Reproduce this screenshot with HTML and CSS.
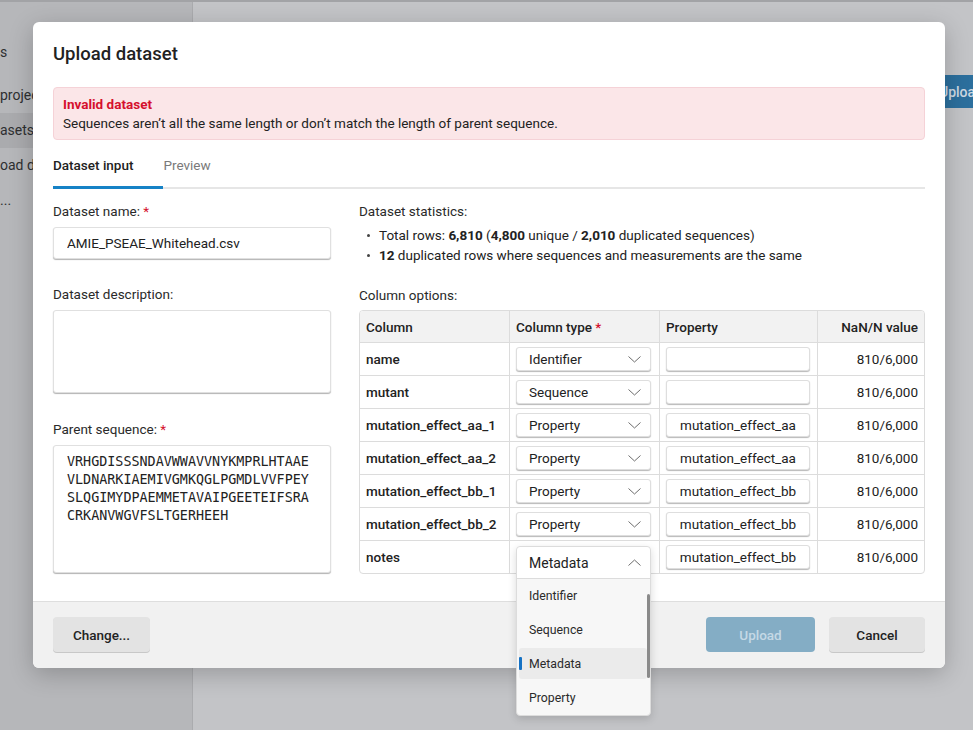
FILE: index.html
```html
<!DOCTYPE html>
<html lang="en">
<head>
<meta charset="utf-8">
<title>Upload dataset</title>
<link rel="stylesheet" href="styles.css">
</head>
<body>
<div class="app">
  <aside class="sidebar">
    <div class="nav-head">s</div>
    <div class="nav-item">projects</div>
    <div class="nav-item active">asets</div>
    <div class="nav-item">oad data</div>
    <div class="nav-item">...</div>
  </aside>
  <main class="main">
    <div class="main-bar">
      <button class="app-upload">Upload</button>
    </div>
  </main>
</div>

<div class="modal">
  <div class="modal-body">
    <h1 class="modal-title">Upload dataset</h1>
    <div class="alert">
      <div class="alert-title">Invalid dataset</div>
      <div class="alert-text">Sequences aren’t all the same length or don’t match the length of parent sequence.</div>
    </div>
    <div class="tabs">
      <div class="tab active">Dataset input</div>
      <div class="tab">Preview</div>
    </div>
    <div class="content">
      <div class="left">
        <div class="label">Dataset name: <span class="req">*</span></div>
        <input class="input" type="text" value="AMIE_PSEAE_Whitehead.csv">
        <div class="label gap">Dataset description:</div>
        <textarea class="textarea desc"></textarea>
        <div class="label gap2">Parent sequence: <span class="req">*</span></div>
        <textarea class="textarea seq">VRHGDISSSNDAVWWAVVNYKMPRLHTAAE
VLDNARKIAEMIVGMKQGLPGMDLVVFPEY
SLQGIMYDPAEMMETAVAIPGEETEIFSRA
CRKANVWGVFSLTGERHEEH</textarea>
      </div>
      <div class="right">
        <div class="label stats-label">Dataset statistics:</div>
        <ul class="stats">
          <li>Total rows: <b>6,810</b> (<b>4,800</b> unique / <b>2,010</b> duplicated sequences)</li>
          <li><b>12</b> duplicated rows where sequences and measurements are the same</li>
        </ul>
        <div class="label opts">Column options:</div>
        <div class="grid">
          <div class="row head">
            <div class="cell">Column</div>
            <div class="cell"><span>Column type <span class="req">*</span></span></div>
            <div class="cell">Property</div>
            <div class="cell num">NaN/N value</div>
          </div>
          <div class="row">
            <div class="cell name">name</div>
            <div class="cell"><div class="select"><span>Identifier</span><svg class="chev" viewBox="0 0 13 7" width="13" height="7"><polyline points="0.5,0.5 6.5,6 12.5,0.5"/></svg></div></div>
            <div class="cell"><div class="prop"></div></div>
            <div class="cell num">810/6,000</div>
          </div>
          <div class="row">
            <div class="cell name">mutant</div>
            <div class="cell"><div class="select"><span>Sequence</span><svg class="chev" viewBox="0 0 13 7" width="13" height="7"><polyline points="0.5,0.5 6.5,6 12.5,0.5"/></svg></div></div>
            <div class="cell"><div class="prop"></div></div>
            <div class="cell num">810/6,000</div>
          </div>
          <div class="row">
            <div class="cell name">mutation_effect_aa_1</div>
            <div class="cell"><div class="select"><span>Property</span><svg class="chev" viewBox="0 0 13 7" width="13" height="7"><polyline points="0.5,0.5 6.5,6 12.5,0.5"/></svg></div></div>
            <div class="cell"><div class="prop">mutation_effect_aa</div></div>
            <div class="cell num">810/6,000</div>
          </div>
          <div class="row">
            <div class="cell name">mutation_effect_aa_2</div>
            <div class="cell"><div class="select"><span>Property</span><svg class="chev" viewBox="0 0 13 7" width="13" height="7"><polyline points="0.5,0.5 6.5,6 12.5,0.5"/></svg></div></div>
            <div class="cell"><div class="prop">mutation_effect_aa</div></div>
            <div class="cell num">810/6,000</div>
          </div>
          <div class="row">
            <div class="cell name">mutation_effect_bb_1</div>
            <div class="cell"><div class="select"><span>Property</span><svg class="chev" viewBox="0 0 13 7" width="13" height="7"><polyline points="0.5,0.5 6.5,6 12.5,0.5"/></svg></div></div>
            <div class="cell"><div class="prop">mutation_effect_bb</div></div>
            <div class="cell num">810/6,000</div>
          </div>
          <div class="row">
            <div class="cell name">mutation_effect_bb_2</div>
            <div class="cell"><div class="select"><span>Property</span><svg class="chev" viewBox="0 0 13 7" width="13" height="7"><polyline points="0.5,0.5 6.5,6 12.5,0.5"/></svg></div></div>
            <div class="cell"><div class="prop">mutation_effect_bb</div></div>
            <div class="cell num">810/6,000</div>
          </div>
          <div class="row">
            <div class="cell name">notes</div>
            <div class="cell combo-cell">
              <div class="combo">
                <div class="combo-head"><span>Metadata</span><svg class="chev" viewBox="0 0 13 7" width="13" height="7"><polyline points="0.5,6.5 6.5,1 12.5,6.5"/></svg></div>
                <ul class="menu">
                  <li class="opt">Identifier</li>
                  <li class="opt">Sequence</li>
                  <li class="opt selected">Metadata</li>
                  <li class="opt">Property</li>
                </ul>
                <div class="scroll"></div>
              </div>
            </div>
            <div class="cell"><div class="prop">mutation_effect_bb</div></div>
            <div class="cell num">810/6,000</div>
          </div>
        </div>
      </div>
    </div>
  </div>
  <div class="modal-footer">
    <button class="btn change">Change...</button>
    <button class="btn primary" disabled>Upload</button>
    <button class="btn cancel">Cancel</button>
  </div>
</div>
</body>
</html>
```

FILE: styles.css
```css
* { box-sizing: border-box; }

body {
  margin: 0;
  width: 973px;
  height: 730px;
  overflow: hidden;
  position: relative;
  font-family: Roboto, "Noto Sans", "Liberation Sans", sans-serif;
  font-size: 13.5px;
  color: #222;
}

.modal-title,
.tab.active,
.row.head,
.cell.name,
.btn,
.app-upload {
  font-family: Roboto, "Noto Sans", sans-serif;
  font-weight: 500;
}

/* background app (dimmed) */
.app {
  display: flex;
  height: 730px;
  border-top: 2px solid #a2a3a6;
}
.sidebar {
  width: 193px;
  flex: none;
  background: #b6b7ba;
  border-right: 1px solid #aaabae;
  padding-top: 33px;
  color: #2e2f31;
  font-size: 14px;
}
.nav-head {
  height: 35px;
  line-height: 35px;
  margin-bottom: 8px;
}
.nav-item {
  height: 35px;
  line-height: 35px;
}
.nav-item.active { background: #aaabae; }
.main {
  flex: 1;
  background: #c3c4c7;
  padding-top: 73px;
}
.main-bar {
  display: flex;
  justify-content: flex-end;
  margin-right: -40px;
}
.app-upload {
  height: 33px;
  padding: 0 16px;
  border: none;
  border-radius: 4px;
  background: #2c6f9d;
  color: #cfd9e2;
  font-size: 14px;
  width: 90px;
  text-align: left;
}

/* modal */
.modal {
  position: absolute;
  left: 33px;
  top: 22px;
  width: 912px;
  background: #fff;
  border-radius: 6px;
  box-shadow: 0 6px 24px rgba(0, 0, 0, 0.22);
}
.modal-body {
  padding: 20px 20px 27px;
}
.modal-title {
  margin: 0;
  font-size: 18.5px;
  line-height: 24px;
  color: #222;
}
.alert {
  margin-top: 21px;
  background: #fbe6e8;
  border: 1px solid #f5d2d7;
  border-radius: 4px;
  padding: 7px 9px 6px;
  line-height: 19px;
}
.alert-title {
  color: #d5102d;
  font-weight: 700;
}
.alert-text {
  color: #222;
}

.tabs {
  margin-top: 10px;
  display: flex;
  border-bottom: 2px solid #e6e6e6;
}
.tab {
  position: relative;
  padding: 5px 30px 12px 0;
  line-height: 20px;
  color: #7a7a7a;
}
.tab.active {
  color: #222;
}
.tab.active::after {
  content: "";
  position: absolute;
  left: 0;
  right: 0;
  bottom: -2px;
  height: 3px;
  background: #1682c6;
}

.content {
  display: flex;
  gap: 28px;
  margin-top: 12px;
}
.left {
  width: 278px;
  flex: none;
  display: flex;
  flex-direction: column;
}
.right {
  flex: 1;
}
.label {
  line-height: 20px;
  color: #2a2a2a;
  margin-bottom: 6px;
}
.label.gap { margin-top: 25px; }
.label.gap2 { margin-top: 26px; }
.req { color: #d5102d; }

.input,
.textarea {
  display: block;
  width: 100%;
  margin: 0;
  border: 1px solid #e0e0e0;
  border-radius: 3px;
  box-shadow: 0 1px 1px rgba(0, 0, 0, 0.3);
  font-family: Roboto, sans-serif;
  font-size: 13.5px;
  color: #222;
  background: #fff;
  outline: none;
}
.input {
  height: 32px;
  padding: 0 13px;
}
.textarea {
  resize: none;
  padding: 7px 13px;
}
.textarea.desc { height: 83px; }
.textarea.seq {
  height: 128px;
  font-family: "DejaVu Sans Mono", "Liberation Mono", monospace;
  font-size: 13.4px;
  line-height: 18px;
  color: #222;
  overflow: hidden;
}

.stats-label { margin-bottom: 4px; }
.stats {
  list-style: none;
  margin: 0;
  padding: 0;
}
.stats li {
  position: relative;
  line-height: 20px;
  padding-left: 20px;
}
.stats li::before {
  content: "";
  position: absolute;
  left: 8px;
  top: 9px;
  width: 3px;
  height: 3px;
  border-radius: 50%;
  background: #444;
}
.stats b { font-weight: 700; }
.label.opts { margin-top: 20px; margin-bottom: 5px; }

/* column table */
.grid {
  border: 1px solid #dcdcdc;
  border-radius: 4px;
}
.row {
  display: grid;
  grid-template-columns: 149px 150px 158px 107px;
  height: 33px;
  border-top: 1px solid #dcdcdc;
}
.row.head {
  height: 31px;
  border-top: none;
  background: #f2f2f2;
  border-radius: 3px 3px 0 0;
}
.cell {
  display: flex;
  align-items: center;
  padding: 0 6px;
  white-space: nowrap;
}
.cell + .cell { border-left: 1px solid #dcdcdc; }
.cell.num {
  justify-content: flex-end;
  padding-right: 6px;
}
.row .cell:nth-child(2) { padding: 0 8px 0 6px; }
.row .cell:nth-child(3) { padding: 0 7px 0 6px; }

.select,
.prop {
  height: 24px;
  width: 100%;
  border: 1px solid #dedede;
  border-radius: 3px;
  box-shadow: 0 1px 1px rgba(0, 0, 0, 0.28);
  background: #fff;
}
.select {
  display: flex;
  align-items: center;
  justify-content: space-between;
  padding: 0 9px 0 12px;
}
.prop {
  display: flex;
  align-items: center;
  justify-content: center;
  overflow: hidden;
}
.chev {
  fill: none;
  stroke: #6d6d6d;
  stroke-width: 1;
}

/* open combo */
.combo-cell { position: relative; }
.combo {
  position: absolute;
  left: 6px;
  top: 5px;
  width: 135px;
  border: 1px solid #dcdcdc;
  border-radius: 4px;
  background: #f7f7f7;
  box-shadow: 0 3px 8px rgba(0, 0, 0, 0.15);
  z-index: 5;
}
.combo-head {
  height: 32px;
  display: flex;
  align-items: center;
  justify-content: space-between;
  padding: 0 9px 0 12px;
  background: #fff;
  border-bottom: 1px solid #dcdcdc;
  border-radius: 4px 4px 0 0;
  font-size: 14px;
}
.menu {
  list-style: none;
  margin: 0;
  padding: 0;
}
.opt {
  height: 34px;
  line-height: 34px;
  padding-left: 12px;
  font-size: 12.3px;
  color: #2a2a2a;
  position: relative;
}
.opt.selected { isolation: isolate; }
.opt.selected::before {
  content: "";
  position: absolute;
  left: 2px;
  right: 3px;
  top: 1px;
  bottom: 2px;
  background: #ebebeb;
  border-radius: 3px;
  z-index: -1;
}
.opt.selected::after {
  content: "";
  position: absolute;
  left: 2px;
  top: 10px;
  width: 3px;
  height: 13px;
  background: #1672c4;
  border-radius: 1px;
}
.scroll {
  position: absolute;
  right: 0;
  top: 47px;
  width: 3px;
  height: 84px;
  border-radius: 2px;
  background: #8a8a8a;
}

/* footer */
.modal-footer {
  display: flex;
  gap: 14px;
  padding: 15px 20px 16px;
  background: #f1f1f1;
  border-top: 1px solid #dedede;
  border-radius: 0 0 6px 6px;
}
.btn {
  height: 35px;
  border: none;
  border-radius: 4px;
  background: #e3e3e3;
  box-shadow: 0 1px 0 #c8c8c8;
  font-size: 13.5px;
  color: #222;
  padding: 0;
}
.btn.change { width: 97px; }
.btn.primary {
  margin-left: auto;
  width: 109px;
  background: #84adc5;
  color: #c4d9e5;
  box-shadow: none;
}
.btn.cancel { width: 96px; }
```
